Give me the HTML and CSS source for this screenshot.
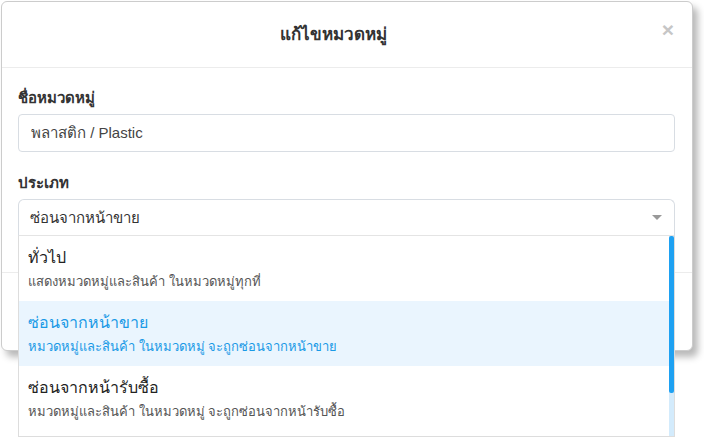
FILE: index.html
```html
<!DOCTYPE html>
<html lang="th">
<head>
<meta charset="utf-8">
<link rel="stylesheet" href="styles.css">
</head>
<body>
<div class="modal">
  <div class="modal-header">
    <h2 class="title">แก้ไขหมวดหมู่</h2>
    <span class="close">×</span>
  </div>
  <div class="modal-body">
    <div class="label">ชื่อหมวดหมู่</div>
    <div class="input">พลาสติก / Plastic</div>
    <div class="label label-2">ประเภท</div>
    <div class="select-wrap">
      <div class="select">
        <span class="select-value">ซ่อนจากหน้าขาย</span>
        <span class="caret"></span>
      </div>
      <div class="dropdown">
        <div class="options">
          <div class="option">
            <div class="opt-title">ทั่วไป</div>
            <div class="opt-desc">แสดงหมวดหมู่และสินค้า ในหมวดหมู่ทุกที่</div>
          </div>
          <div class="option active">
            <div class="opt-title">ซ่อนจากหน้าขาย</div>
            <div class="opt-desc">หมวดหมู่และสินค้า ในหมวดหมู่ จะถูกซ่อนจากหน้าขาย</div>
          </div>
          <div class="option">
            <div class="opt-title">ซ่อนจากหน้ารับซื้อ</div>
            <div class="opt-desc">หมวดหมู่และสินค้า ในหมวดหมู่ จะถูกซ่อนจากหน้ารับซื้อ</div>
          </div>
        </div>
        <div class="scrollbar"><div class="thumb"></div></div>
      </div>
    </div>
  </div>
  <div class="modal-footer"></div>
</div>
</body>
</html>
```

FILE: styles.css
```css
* { box-sizing: border-box; }
html, body {
  margin: 0;
  padding: 0;
  background: #ffffff;
}
body {
  font-family: "Liberation Sans", "Noto Sans", sans-serif;
  color: #333333;
  padding: 1px 0 0 1px;
  min-height: 440px;
}
.modal {
  width: 692px;
  height: 350px;
  background: #ffffff;
  border: 1px solid #cccccc;
  border-radius: 6px;
  box-shadow: 5px 6px 7px rgba(0, 0, 0, 0.28);
  display: flex;
  flex-direction: column;
}
.modal-header {
  height: 66px;
  flex: none;
  border-bottom: 1px solid #ececec;
  display: flex;
  align-items: center;
  padding: 0 17px 0 4px;
}
.title {
  flex: 1;
  margin: 0;
  text-align: center;
  font-size: 17px;
  font-weight: bold;
  color: #333333;
  line-height: 24px;
}
.close {
  width: 14px;
  font-size: 21px;
  font-weight: bold;
  color: #c6c6c6;
  line-height: 24px;
  text-align: center;
  margin-top: -9px;
}
.modal-body {
  flex: none;
  padding: 20px 17px 36px 16px;
  border-bottom: 1px solid #ececec;
}
.label {
  font-size: 15px;
  font-weight: bold;
  line-height: 20px;
  color: #333333;
  margin-bottom: 6px;
}
.label-2 {
  margin-top: 21px;
}
.input {
  height: 38px;
  border: 1px solid #d8dde3;
  border-radius: 4px;
  padding: 0 12px;
  font-size: 15px;
  line-height: 36px;
  color: #444444;
}
.select-wrap {
  position: relative;
}
.select {
  height: 37px;
  border: 1px solid #d8dde3;
  border-bottom: 1px solid #e4e4e4;
  border-radius: 6px 6px 0 0;
  display: flex;
  align-items: center;
  justify-content: space-between;
  padding: 0 12px 0 11px;
  font-size: 15px;
  color: #333333;
}
.caret {
  width: 0;
  height: 0;
  border-left: 5px solid transparent;
  border-right: 5px solid transparent;
  border-top: 5px solid #999999;
}
.dropdown {
  position: absolute;
  top: 100%;
  left: 0;
  right: 0;
  height: 201px;
  background: #ffffff;
  border: 1px solid #dddddd;
  border-top: none;
  display: flex;
  z-index: 10;
}
.options {
  flex: 1;
}
.option {
  height: 65px;
  padding: 11px 9px 0;
}
.option.active {
  background: #eaf5fe;
}
.opt-title {
  font-size: 16px;
  line-height: 22px;
  color: #222222;
}
.opt-desc {
  font-size: 13px;
  line-height: 20px;
  color: #555555;
  margin-top: 3px;
}
.option.active .opt-title,
.option.active .opt-desc {
  color: #1a9ae6;
}
.scrollbar {
  width: 5px;
  background: #d3ebfc;
  display: flex;
  flex-direction: column;
}
.thumb {
  height: 157px;
  background: #1ea1f2;
  border-radius: 2px;
}
```
